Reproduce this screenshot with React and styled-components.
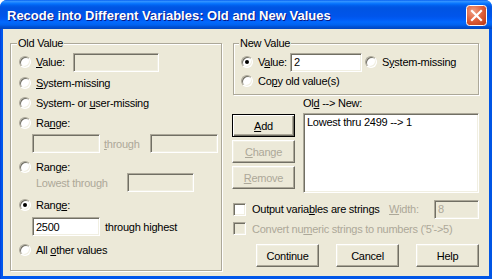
import React from 'react';
import styled, { createGlobalStyle } from 'styled-components';

const GlobalStyle = createGlobalStyle`
  html, body {
    margin: 0;
    padding: 0;
    background: #ffffff;
  }
  body {
    font-family: 'Liberation Sans', Arial, sans-serif;
    font-size: 11px;
    letter-spacing: -0.25px;
    color: #000;
  }
`;

const Window = styled.div`
  width: 492px;
  height: 279px;
  display: flex;
  flex-direction: column;
  background: linear-gradient(to right, #0831d9 0, #0055e5 1px, #0058ee 2px, #0055e5 100%);
  border-radius: 7px 7px 0 0;
  overflow: hidden;
`;

const TitleBar = styled.div`
  height: 29px;
  flex: none;
  display: flex;
  align-items: center;
  justify-content: space-between;
  padding: 2px 5px 0 7px;
  box-sizing: border-box;
  background: linear-gradient(
    to bottom,
    #0058ee 0%,
    #3593ff 4%,
    #288eff 7%,
    #127dff 10%,
    #036ffc 14%,
    #0262ee 18%,
    #0057e5 24%,
    #0054e3 30%,
    #0055eb 56%,
    #005bf5 66%,
    #026afe 76%,
    #0062ef 86%,
    #0052d6 92%,
    #0047c0 100%
  );
`;

const Title = styled.div`
  color: #fff;
  font-weight: bold;
  font-size: 13px;
  letter-spacing: 0;
  text-shadow: 1px 1px #0a1883;
`;

const CloseBox = styled.svg`
  display: block;
  width: 21px;
  height: 21px;
`;

const Client = styled.div`
  flex: 1;
  margin: 0 3px 3px 3px;
  background: #ece9d8;
  display: flex;
  gap: 11px;
  padding: 8px 10px 0 7px;
  box-sizing: border-box;
`;

const Group = styled.fieldset`
  margin: 0;
  min-width: 0;
  box-sizing: border-box;
  width: ${(p) => p.$w}px;
  height: ${(p) => p.$h}px;
  padding: ${(p) => p.$pad};
  border: 1px solid #aca899;
  box-shadow: inset 1px 1px #fff, 1px 1px #fff;
  display: flex;
  flex-direction: column;
`;

const Legend = styled.legend`
  line-height: 12px;
  padding: 0 1px;
  margin-left: -2px;
  background: #ece9d8;
`;

const Row = styled.div`
  display: flex;
  align-items: center;
  flex: none;
  height: ${(p) => p.$h || 20}px;
  margin-top: ${(p) => p.$mt || 0}px;
  padding-left: ${(p) => p.$pl || 0}px;
`;

const Radio = styled.span`
  position: relative;
  flex: none;
  width: 12px;
  height: 12px;
  box-sizing: border-box;
  border-radius: 50%;
  background: #fff;
  border: 1px solid;
  border-color: #aca899 #fff #fff #aca899;
  box-shadow: inset 1px 1px #716f64, inset -1px -1px #f1efe2;
  margin-right: 5px;
  margin-left: ${(p) => p.$ml || 0}px;

  &::after {
    content: '';
    display: ${(p) => (p.$on ? 'block' : 'none')};
    position: absolute;
    left: 3px;
    top: 3px;
    width: 4px;
    height: 4px;
    border-radius: 50%;
    background: #000;
  }
`;

const Check = styled.span`
  flex: none;
  width: 13px;
  height: 13px;
  box-sizing: border-box;
  background: ${(p) => (p.$off ? '#ece9d8' : '#fff')};
  border: 1px solid;
  border-color: #aca899 #fff #fff #aca899;
  box-shadow: inset 1px 1px #716f64, inset -1px -1px #f1efe2;
  margin-right: 6px;
`;

const Label = styled.span`
  flex: none;
  white-space: nowrap;
  width: ${(p) => (p.$w ? `${p.$w}px` : 'auto')};
  margin-left: ${(p) => p.$ml || 0}px;
  color: ${(p) => (p.$off ? '#aca899' : '#000')};
`;

const Field = styled.input`
  flex: none;
  box-sizing: border-box;
  width: ${(p) => p.$w}px;
  height: 19px;
  margin: 0 0 0 ${(p) => p.$ml || 0}px;
  padding: 0 3px;
  font: inherit;
  letter-spacing: inherit;
  color: ${(p) => (p.$off ? '#aca899' : '#000')};
  background: ${(p) => (p.$off ? '#ece9d8' : '#fff')};
  border: 1px solid;
  border-color: #aca899 #fff #fff #aca899;
  box-shadow: inset 1px 1px #716f64, inset -1px -1px #f1efe2;
  outline: none;
`;

const Side = styled.div`
  width: 246px;
  display: flex;
  flex-direction: column;
`;

const Middle = styled.div`
  display: grid;
  grid-template-columns: 63px 1fr;
  grid-template-rows: 13px 80px;
  column-gap: 8px;
  row-gap: 3px;
  margin: 2px 0 0 -1px;
`;

const ListCaption = styled.div`
  grid-column: 2;
  line-height: 13px;
`;

const ButtonStack = styled.div`
  display: flex;
  flex-direction: column;
  gap: 3px;
  margin-top: 1px;
`;

const ListBox = styled.div`
  box-sizing: border-box;
  background: #fff;
  padding: 2px 3px;
  border: 1px solid;
  border-color: #aca899 #fff #fff #aca899;
  box-shadow: inset 1px 1px #716f64, inset -1px -1px #f1efe2;
  line-height: 13px;
`;

const Button = styled.button`
  width: 63px;
  height: 23px;
  box-sizing: border-box;
  padding: 0;
  font: inherit;
  letter-spacing: inherit;
  color: ${(p) => (p.disabled ? '#aca899' : '#000')};
  background: #ece9d8;
  border: 1px solid;
  border-color: ${(p) => (p.$main ? '#000' : '#fff #716f64 #716f64 #fff')};
  box-shadow: ${(p) =>
    p.$main
      ? 'inset 1px 1px #fff, inset -1px -1px #716f64, inset -2px -2px #aca899'
      : 'inset -1px -1px #aca899, inset 1px 1px #f1efe2'};
`;

const Spacer = styled.span`
  flex: 1;
`;

const ButtonRow = styled.div`
  display: flex;
  justify-content: flex-end;
  gap: 17px;
  margin-top: 7px;
`;

export default function App() {
  return (
    <>
      <GlobalStyle />
      <Window>
        <TitleBar>
          <Title>Recode into Different Variables: Old and New Values</Title>
          <CloseBox viewBox="0 0 21 21">
            <defs>
              <radialGradient id="cg" cx="35%" cy="30%" r="80%">
                <stop offset="0" stopColor="#f0a185" />
                <stop offset="0.55" stopColor="#e0613c" />
                <stop offset="1" stopColor="#c2401c" />
              </radialGradient>
            </defs>
            <rect x="0.5" y="0.5" width="20" height="20" rx="3" fill="url(#cg)" stroke="#fff" />
            <path d="M6 6 L15 15 M15 6 L6 15" stroke="#fff" strokeWidth="2.2" strokeLinecap="square" />
          </CloseBox>
        </TitleBar>
        <Client>
          <Group $w={212} $h={234} $pad="3px 8px 0 8px">
            <Legend>Old Value</Legend>
            <Row>
              <Radio />
              <Label $w={37}><u>V</u>alue:</Label>
              <Field $w={86} $off readOnly defaultValue="" />
            </Row>
            <Row $h={21}>
              <Radio />
              <Label><u>S</u>ystem-missing</Label>
            </Row>
            <Row>
              <Radio />
              <Label>System- or <u>u</u>ser-missing</Label>
            </Row>
            <Row>
              <Radio />
              <Label>Ra<u>n</u>ge:</Label>
            </Row>
            <Row $h={19} $pl={13} $mt={1}>
              <Field $w={68} $off readOnly defaultValue="" />
              <Label $w={46} $ml={4} $off><u>t</u>hrough</Label>
              <Field $w={68} $off readOnly defaultValue="" />
            </Row>
            <Row $h={12} $mt={8}>
              <Radio />
              <Label>Ran<u>g</u>e:</Label>
            </Row>
            <Row $h={19} $pl={17}>
              <Label $w={91} $off>Lowest through</Label>
              <Field $w={67} $off readOnly defaultValue="" />
            </Row>
            <Row $mt={3}>
              <Radio $on />
              <Label>Rang<u>e</u>:</Label>
            </Row>
            <Row $h={19} $mt={2} $pl={13}>
              <Field $w={68} readOnly defaultValue="2500" />
              <Label $ml={5}>through highest</Label>
            </Row>
            <Row $mt={4}>
              <Radio />
              <Label>All <u>o</u>ther values</Label>
            </Row>
          </Group>
          <Side>
            <Group $w={246} $h={58} $pad="3px 6px 0 7px">
              <Legend>New Value</Legend>
              <Row>
                <Radio $on />
                <Label $w={32}>V<u>a</u>lue:</Label>
                <Field $w={72} readOnly defaultValue="2" />
                <Radio $ml={3} />
                <Label>S<u>y</u>stem-missing</Label>
              </Row>
              <Row $h={18}>
                <Radio />
                <Label>Co<u>p</u>y old value(s)</Label>
              </Row>
            </Group>
            <Middle>
              <ListCaption>Ol<u>d</u> --&gt; New:</ListCaption>
              <ButtonStack>
                <Button $main><u>A</u>dd</Button>
                <Button disabled><u>C</u>hange</Button>
                <Button disabled><u>R</u>emove</Button>
              </ButtonStack>
              <ListBox>Lowest thru 2499 --&gt; 1</ListBox>
            </Middle>
            <Row $mt={6}>
              <Check />
              <Label>Output varia<u>b</u>les are strings</Label>
              <Spacer />
              <Label $w={45} $off><u>W</u>idth:</Label>
              <Field $w={45} $off readOnly defaultValue="8" />
            </Row>
            <Row $h={17} $mt={1}>
              <Check $off />
              <Label $off>Convert nu<u>m</u>eric strings to numbers ('5'-&gt;5)</Label>
            </Row>
            <ButtonRow>
              <Button>Continue</Button>
              <Button>Cancel</Button>
              <Button>Help</Button>
            </ButtonRow>
          </Side>
        </Client>
      </Window>
    </>
  );
}
